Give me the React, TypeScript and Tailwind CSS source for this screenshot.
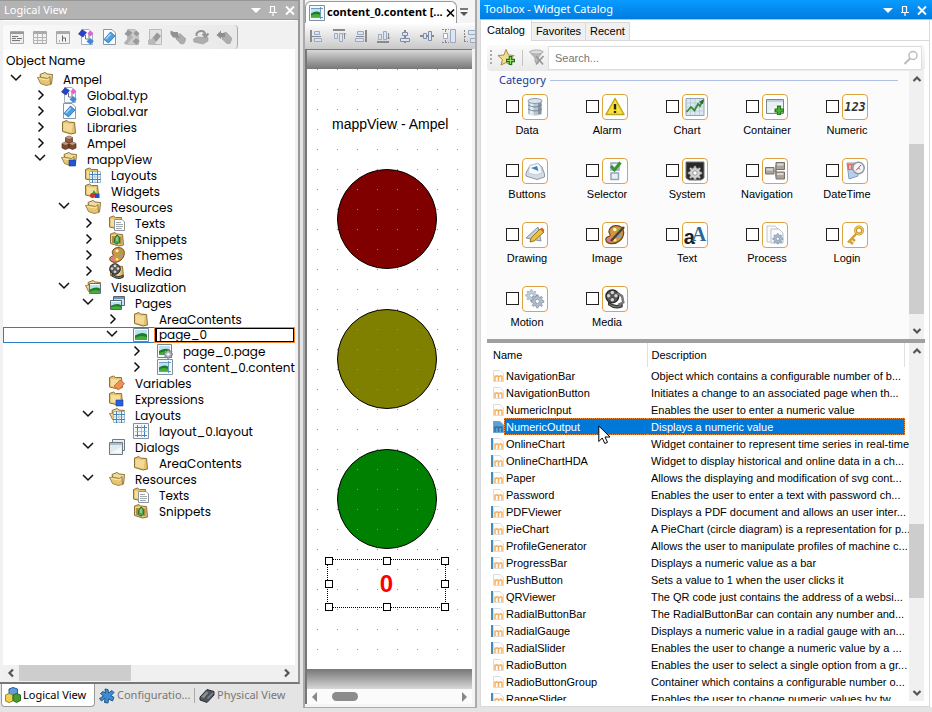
import React from "react";

type IconProps = { children: React.ReactNode; className?: string; size?: number };

function Svg({ children, className = "", size = 16 }: IconProps) {
  return (
    <svg viewBox={size === 20 ? "0 0 20 20" : "0 0 16 16"} width={size} height={size} className={`block shrink-0 ${className}`} fill="none" aria-hidden="true">
      {children}
    </svg>
  );
}

/* ---------- tree icons ---------- */

const closedFolder = (
  <>
    <path d="M1.500 3 6 1.500 7.500 3 13.500 3.500 14.500 14 10 15 1.500 12.500Z" fill="#e3c36f" stroke="#8d7135" />
    <path d="M2.500 4 12 5 10.500 13.500 2.500 11.500Z" fill="#f2da96" />
  </>
);

const openFolder = (
  <>
    <path d="M3 3.500 8 1.500 10 3 15.500 3.500 14.500 13 5 11Z" fill="#efdca0" stroke="#8d7135" />
    <path d="M.5 6.500 3 6 10.500 7.500 13 5.500 13.500 13.500 9 14.500 3.500 12.500Z" fill="#e6c56f" stroke="#8d7135" strokeWidth=".8" />
    <path d="M2 7.500 10 9 12 8" stroke="#f9ebb9" />
  </>
);

const miniFolder = (
  <>
    <path d="M.5 2.500 4.500 1 6.500 2.500 12.500 2.500 13.500 12.500 9 14 .5 12Z" fill="#e3c36f" stroke="#8d7135" />
    <path d="M2 4 11 4.500 11 12 2 11Z" fill="#f4df9f" />
  </>
);

const gridSheet = (
  <>
    <path d="M4.500 4.500H15.500V15.500H4.500Z" fill="#f1f7fb" stroke="#9fbad0" />
    <path d="M4 7.500H16M4 12.500H16M7.500 4V16M12.500 4V16" stroke="#4b82b4" />
    <path d="M4 10H16M10 4V16" stroke="#93b9d8" strokeWidth=".7" />
  </>
);

const landscape = (x: number, y: number, w: number, h: number) => (
  <>
    <rect x={x} y={y} width={w} height={h} fill="#b9e2f2" />
    <path d={`M${x} ${y + h * 0.55}Q${x + w * 0.6} ${y + h * 0.1} ${x + w} ${y + h * 0.45}V${y + h}H${x}Z`} fill="#1f7a2c" />
    <path d={`M${x} ${y + h * 0.8}Q${x + w * 0.5} ${y + h * 0.45} ${x + w} ${y + h * 0.75}V${y + h}H${x}Z`} fill="#45ad3a" />
  </>
);

const gearPath =
  "M7.200 1H8.800L9.300 3 10.700 3.600 12.500 2.600 13.600 3.700 12.500 5.400 13.100 6.800 15 7.300V8.900L13.100 9.400 12.500 10.800 13.600 12.500 12.400 13.600 10.700 12.500 9.300 13.100 8.800 15H7.200L6.700 13.100 5.300 12.500 3.600 13.600 2.400 12.400 3.500 10.700 2.900 9.300 1 8.800V7.200L2.900 6.700 3.500 5.300 2.500 3.600 3.600 2.500 5.300 3.500 6.700 2.900Z";

const paletteArt = (
  <>
    <path d="M8.500 .6C13 .3 15.500 2.500 15.300 6.500 15 11.500 10.500 15.600 5 15.300 2 15 .5 13.500 .7 11.300 1 9.500 3.500 9.700 4.200 8.600 4.600 7.500 2.600 6.600 3.400 4.500 4.200 2 6 .8 8.500 .6Z" fill="#cf9444" stroke="#704617" />
    <circle cx="8" cy="3.700" r="1.500" fill="#fff0cc" />
    <circle cx="12" cy="5" r="1.500" fill="#71b94a" />
    <circle cx="11.500" cy="9" r="1.500" fill="#7aa4d8" />
    <circle cx="4" cy="12.300" r="1.500" fill="#ee69b8" />
    <circle cx="8" cy="12.300" r="1.500" fill="#f7e465" />
  </>
);

const reelArt = (
  <>
    <circle cx="6" cy="6" r="5.300" fill="#555" stroke="#252525" />
    <circle cx="6" cy="2.900" r="1.400" fill="#d4d4d4" />
    <circle cx="3" cy="5.600" r="1.400" fill="#d4d4d4" />
    <circle cx="9" cy="5.600" r="1.400" fill="#d4d4d4" />
    <circle cx="6" cy="8.800" r="1.400" fill="#d4d4d4" />
    <path d="M3 11Q9 15.500 14 12V14.500Q8 17 3 13Z" fill="#777" stroke="#333" />
  </>
);

type IconName =
  | "folder" | "open" | "types" | "vars" | "boxes" | "mapp" | "layouts" | "widgets" | "texts" | "snippets"
  | "themes" | "media" | "vis" | "pages" | "page" | "pageFile" | "contentFile" | "variables" | "expressions"
  | "layoutsOpen" | "layoutFile" | "dialogs";

const typesArt = (
  <>
    <path d="M3.500 .5H11L14.500 4V15.500H3.500Z" fill="#fafcff" stroke="#a3afba" />
    <path d="M7.500 6V10H10M11 5V12" stroke="#777" />
    <path d="M.5 5 4 .8 8.500 3.500 5 8Z" fill="#2742cf" stroke="#1a2b8a" strokeWidth=".6" />
    <path d="M9.500 4.500 12 1.500 15.500 4.500 12.500 7.500Z" fill="#e661d9" />
    <path d="M8.500 12.500 12 9 15.800 12 12.500 15.800Z" fill="#3d88dc" />
  </>
);

const varsArt = (
  <>
    <path d="M2.500 .5H11L14.500 4V15.500H2.500Z" fill="#fafcff" stroke="#8797a6" />
    <path d="M3 10.500 9.500 3 14 7 7.500 14Z" fill="#4da0e2" stroke="#236bae" strokeWidth=".8" />
    <path d="M5 10 9.500 5" stroke="#a6d7fa" strokeWidth="1.500" />
  </>
);

const treeArt: Record<IconName, React.ReactNode> = {
  folder: closedFolder,
  open: openFolder,
  types: typesArt,
  vars: varsArt,
  boxes: (
    <>
      <path d="M4.500 2.500 8 1 11.500 2.500V7L8 8.500 4.500 7Z" fill="#8c5a3e" stroke="#573523" strokeWidth=".7" />
      <path d="M1 8.500 4.500 7 8 8.500V13L4.500 14.500 1 13ZM8 8.500 11.500 7 15 8.500V13L11.500 14.500 8 13Z" fill="#7a4a31" stroke="#4c2d1d" strokeWidth=".7" />
      <path d="M4.500 2.500 8 1 11.500 2.500 8 4ZM1 8.500 4.500 7 8 8.500 4.500 10ZM8 8.500 11.500 7 15 8.500 11.500 10Z" fill="#c99878" />
    </>
  ),
  mapp: (
    <>
      {openFolder}
      <path d="M8 9H14.500V15H8Z" fill="#2553d8" stroke="#1a3a9b" strokeWidth=".6" />
    </>
  ),
  layouts: <>{miniFolder}{gridSheet}</>,
  widgets: (
    <>
      {miniFolder}
      <path d="M9 7 12 12H6Z" fill="#3ba437" />
      <circle cx="7.500" cy="12.500" r="2.500" fill="#d3302e" />
      <path d="M10 10.500H14.500V15H10Z" fill="#1b55c2" />
    </>
  ),
  texts: (
    <>
      {miniFolder}
      <path d="M5.500 4.500H13L15.500 7V15.500H5.500Z" fill="#fff" stroke="#8c939b" />
      <path d="M7 7.500H12M7 9.500H14M7 11.500H14M7 13.500H13" stroke="#a3a9b0" />
    </>
  ),
  snippets: (
    <>
      {closedFolder}
      <path d="M3 5 12.500 5.500V13L3 12Z" fill="#ad8d46" />
      <path d="M8 4Q11.500 6 10.500 11 8 14.500 5.500 11.500 4.500 7 8 4Z" fill="#55a84b" stroke="#2e6b33" />
      <path d="M8 6V10" stroke="#c7efb4" />
    </>
  ),
  themes: paletteArt,
  media: <>{closedFolder}{reelArt}</>,
  vis: (
    <>
      {openFolder}
      <path d="M4.500 4.500H15.500V14.500H4.500Z" fill="#fff" stroke="#63717f" />
      {landscape(5, 6, 10, 8)}
    </>
  ),
  pages: (
    <>
      <path d="M4.500 1.500H15.500V10.500H4.500Z" fill="#cfe2ee" stroke="#59656f" />
      <path d="M5 3H15" stroke="#6b95b8" strokeWidth="2" />
      <path d="M1.500 5.500H12.500V14.500H1.500Z" fill="#fff" stroke="#59656f" />
      {landscape(2, 7, 10, 7)}
    </>
  ),
  page: (
    <>
      <path d="M.5 1.500H15.500V14.500H.5Z" fill="#fff" stroke="#79858f" />
      {landscape(2, 3, 12, 10)}
    </>
  ),
  pageFile: (
    <>
      <path d="M.5 1.500H14.500V14.500H.5Z" fill="#fff" stroke="#79858f" />
      {landscape(2, 3, 11, 9)}
      <g transform="translate(6 6) scale(.65)">
        <path d={gearPath} fill="#aeb7c0" stroke="#59636d" />
        <circle cx="8" cy="8" r="2" fill="#fff" />
      </g>
    </>
  ),
  contentFile: (
    <>
      <path d="M.5 .5H15.500V15.500H.5Z" fill="#f3f8fb" stroke="#8291a0" />
      {landscape(2, 4, 9, 8)}
      <path d="M11.500 2V14M2 3.500H14M2 12.500H14" stroke="#4a86b8" strokeWidth=".8" />
    </>
  ),
  variables: (
    <>
      {miniFolder}
      <path d="M5 11 11 5 15.500 8.500 9.500 15Z" fill="#f29155" stroke="#c8602a" strokeWidth=".8" />
    </>
  ),
  expressions: (
    <>
      {miniFolder}
      <path d="M7 9H14V15H7Z" fill="#2b5edc" stroke="#1a3a9b" strokeWidth=".6" />
    </>
  ),
  layoutsOpen: <>{openFolder}{gridSheet}</>,
  layoutFile: (
    <>
      <path d="M.5 .5H15.500V15.500H.5Z" fill="#f5f8fb" stroke="#8291a0" />
      <path d="M2 4.500H14M2 12.500H14M4.500 2V14M11.500 2V14" stroke="#4b82b4" />
      <path d="M2 8.500H14M8.500 2V14" stroke="#93b9d8" strokeWidth=".8" />
    </>
  ),
  dialogs: (
    <>
      <path d="M3.500 .5H15.500V11.500H3.500Z" fill="#e8eef2" stroke="#6d7a84" />
      <path d="M.5 3.500H13.500V15.500H.5Z" fill="#e3ebef" stroke="#6d7a84" />
      <path d="M1 5H13" stroke="#a9bfce" strokeWidth="2" />
      <path d="M2 14 12 8V14Z" fill="#f4f8fa" />
    </>
  ),
};

type Node = { level: number; label: string; icon: IconName; state?: "open" | "closed"; editing?: boolean };

const nodes: Node[] = [
  { level: 0, label: "Ampel", icon: "open", state: "open" },
  { level: 1, label: "Global.typ", icon: "types", state: "closed" },
  { level: 1, label: "Global.var", icon: "vars", state: "closed" },
  { level: 1, label: "Libraries", icon: "folder", state: "closed" },
  { level: 1, label: "Ampel", icon: "boxes", state: "closed" },
  { level: 1, label: "mappView", icon: "mapp", state: "open" },
  { level: 2, label: "Layouts", icon: "layouts" },
  { level: 2, label: "Widgets", icon: "widgets" },
  { level: 2, label: "Resources", icon: "open", state: "open" },
  { level: 3, label: "Texts", icon: "texts", state: "closed" },
  { level: 3, label: "Snippets", icon: "snippets", state: "closed" },
  { level: 3, label: "Themes", icon: "themes", state: "closed" },
  { level: 3, label: "Media", icon: "media", state: "closed" },
  { level: 2, label: "Visualization", icon: "vis", state: "open" },
  { level: 3, label: "Pages", icon: "pages", state: "open" },
  { level: 4, label: "AreaContents", icon: "folder", state: "closed" },
  { level: 4, label: "page_0", icon: "page", state: "open", editing: true },
  { level: 5, label: "page_0.page", icon: "pageFile", state: "closed" },
  { level: 5, label: "content_0.content", icon: "contentFile", state: "closed" },
  { level: 3, label: "Variables", icon: "variables" },
  { level: 3, label: "Expressions", icon: "expressions" },
  { level: 3, label: "Layouts", icon: "layoutsOpen", state: "open" },
  { level: 4, label: "layout_0.layout", icon: "layoutFile" },
  { level: 3, label: "Dialogs", icon: "dialogs", state: "open" },
  { level: 4, label: "AreaContents", icon: "folder" },
  { level: 3, label: "Resources", icon: "open", state: "open" },
  { level: 4, label: "Texts", icon: "texts" },
  { level: 4, label: "Snippets", icon: "snippets" },
];

const indent = ["pl-[6px]", "pl-[30px]", "pl-[54px]", "pl-[78px]", "pl-[102px]", "pl-[126px]"];

function Expander({ state }: { state?: "open" | "closed" }) {
  if (!state) return <span className="w-4 shrink-0" />;
  return (
    <button className="h-4 w-4 shrink-0" aria-label={state === "open" ? "Collapse" : "Expand"}>
      <Svg>
        {state === "open" ? (
          <path d="M2 4 7 9 12 4" stroke="#111" strokeWidth="1.500" />
        ) : (
          <path d="M5.500 3.500 10 8 5.500 12.500" stroke="#111" strokeWidth="1.500" />
        )}
      </Svg>
    </button>
  );
}

function TreeRow({ node }: { node: Node }) {
  return (
    <li
      role="treeitem"
      aria-expanded={node.state ? node.state === "open" : undefined}
      className={`flex h-4 items-center whitespace-nowrap ${indent[node.level]} ${node.editing ? "outline outline-1 -outline-offset-1 outline-[#2a7fcb]" : ""}`}
    >
      <Expander state={node.state} />
      <Svg className="ml-[12px]">{treeArt[node.icon]}</Svg>
      {node.editing ? (
        <div className="z-10 ml-[5px] flex h-4 min-w-0 flex-1 border border-[#ef8a3c]">
          <input
            aria-label="Object name"
            defaultValue={node.label}
            className="h-full w-full min-w-0 border border-l-2 border-black bg-white pl-[2px] outline-none"
          />
        </div>
      ) : (
        <span className="ml-[10px] pt-[2px]">{node.label}</span>
      )}
    </li>
  );
}

/* ---------- shared chrome ---------- */

function WindowButtons() {
  return (
    <div className="flex items-center gap-[1px] text-white">
      <button aria-label="Menu">
        <Svg><path d="M3 6H13L8 11Z" fill="currentColor" /></Svg>
      </button>
      <button aria-label="Pin">
        <Svg><path d="M5.500 10V4.500H9.500V10M4 10.500H12M8 11V14M9.500 4V10" stroke="currentColor" strokeWidth="1.200" /></Svg>
      </button>
      <button aria-label="Close">
        <Svg><path d="M4 4.500 12 12.500M12 4.500 4 12.500" stroke="currentColor" strokeWidth="1.800" /></Svg>
      </button>
    </div>
  );
}

function Arrow({ dir }: { dir: "up" | "down" | "left" | "right" }) {
  const paths = {
    up: "M4.500 10 8 6.500 11.500 10",
    down: "M4.500 6 8 9.500 11.500 6",
    left: "M10 4.500 6.500 8 10 11.500",
    right: "M6 4.500 9.500 8 6 11.500",
  };
  return (
    <button aria-label={`Scroll ${dir}`} className="shrink-0">
      <Svg><path d={paths[dir]} stroke="#555" strokeWidth="2.200" /></Svg>
    </button>
  );
}

/* ---------- left panel ---------- */

const leftTools: { name: string; art: React.ReactNode }[] = [
  { name: "Text file", art: <><path d="M1.500 2.500H14.500V14.500H1.500Z" fill="#eee" stroke="#aaa" /><path d="M1 4H15" stroke="#999" strokeWidth="2" /><path d="M3 7.500H9M3 9.500H7M8 9.500H13M3 11.500H11" stroke="#777" /></> },
  { name: "Table file", art: <><path d="M1.500 2.500H14.500V14.500H1.500Z" fill="#f2f2f2" stroke="#aaa" /><path d="M1 4H15" stroke="#aaa" strokeWidth="2" /><path d="M1 8.500H15M1 11.500H15M5.500 5V14M10.500 5V14" stroke="#b5b5b5" /></> },
  { name: "Header file", art: <><path d="M1.500 2.500H14.500V14.500H1.500Z" fill="#f2f2f2" stroke="#aaa" /><path d="M1 4H15" stroke="#aaa" strokeWidth="2" /><path d="M4 12H5M7.500 6.500V12.500M7.500 9H10.500V12.500" stroke="#666" /></> },
  { name: "Data types", art: typesArt },
  { name: "Variables", art: varsArt },
  { name: "Local types", art: <><path d="M3.500 .5H11L14.500 4V15.500H3.500Z" fill="#ccc" stroke="#bbb" /><path d="M.5 5 4 .8 8.500 3.500 5 8ZM9.500 4.500 12 1.500 15.500 4.500 12.500 7.500ZM8.500 12.500 12 9 15.800 12 12.500 15.800Z" fill="#999" /><path d="M1 15 8 7" stroke="#b0b0b0" strokeWidth="3" /></> },
  { name: "Local variables", art: <><path d="M2.500 .5H14.500V15.500H2.500Z" fill="#e2e2e2" stroke="#bbb" /><path d="M5 9.500 10 3.500 14 7 9 13Z" fill="#999" /><path d="M1 15.500V11L7 9 9 15.500Z" fill="#b9b9b9" /></> },
  { name: "Import", art: <><path d="M6 6.500 10 4.500 16 10 14 14.500 11 15 6 10Z" fill="#adadad" stroke="#999" strokeWidth=".6" /><path d="M.5 1.500 4 3 8 3 8 6.500 10 9 3 8.500 .5 5Z" fill="#929292" /></> },
  { name: "Refresh", art: <><path d="M.5 10 4 8 15 8.500V12L10 15 1 13Z" fill="#adadad" stroke="#999" strokeWidth=".6" /><path d="M3.500 7V5Q5 1.500 9 2 12 2.500 12.500 6M9.500 5 12.500 8 15.500 4.500" stroke="#949494" strokeWidth="2" /></> },
  { name: "Export", art: <><path d="M6 5 10 3 16 9.500 14 14.500 11 14.500 6 10Z" fill="#adadad" stroke="#999" strokeWidth=".6" /><path d="M.5 6 5 1.500V4H9V8H5V10Z" fill="#8e8e8e" /></> },
];

function LogicalView() {
  return (
    <aside className="flex w-[300px] shrink-0 flex-col">
      <div className="flex min-h-0 flex-1 flex-col border-r-2 border-b-2 border-r-[#999] border-b-[#777] bg-[#f1f1f1]">
        <header className="flex h-5 shrink-0 items-center justify-between border-y border-[#979797] bg-[#b3b3b3] pl-1 font-['Noto_Sans','Open_Sans',sans-serif] text-[11px] text-white">
          <h2>Logical View</h2>
          <WindowButtons />
        </header>
        <div className="mx-[3px] flex min-h-0 flex-1 flex-col border-t border-white">
          <div className="flex h-7 shrink-0 items-center pt-1">
            <div className="flex h-6 items-center gap-[7px] rounded border-r border-[#aaa] bg-linear-to-r from-[#fafafa] to-[#e9e9e9] pr-[5px] pl-[6px]">
              {leftTools.map((t) => (
                <button key={t.name} aria-label={t.name}><Svg>{t.art}</Svg></button>
              ))}
            </div>
          </div>
          <div className="min-h-0 flex-1 overflow-hidden bg-white font-['Poppins','Inter',sans-serif] text-[12px] leading-4 text-black [font-feature-settings:'cv11']">
            <div className="flex h-[22px] items-center pt-[2px] pl-[3px]">Object Name</div>
            <ul role="tree">
              {nodes.map((n, i) => <TreeRow key={i} node={n} />)}
            </ul>
          </div>
          <div className="mb-[1px] flex h-4 shrink-0 items-center justify-between bg-[#f0f0f0]">
            <Arrow dir="left" />
            <div className="h-4 flex-1"><div className="h-4 w-[43%] bg-[#cdcdcd]" /></div>
            <Arrow dir="right" />
          </div>
        </div>
      </div>
      <nav className="flex h-[28px] shrink-0 items-start pl-[1px] font-['Noto_Sans','Open_Sans',sans-serif] text-[11px] text-[#777]">
        <button className="flex h-[23px] w-[94px] items-center gap-[2px] rounded-b border border-t-0 border-[#999] bg-white pl-[3px] whitespace-nowrap text-black">
          <Svg>
            <path d="M4 2 8 .5 12.500 2V8L8 10 4 8Z" fill="#5d9edf" stroke="#2a5b94" />
            <path d="M.5 8 4 6.500 8 8V14L4 15.500 .5 14Z" fill="#efd451" stroke="#9b842b" />
            <path d="M8 8 11.500 6.500 15.500 8V13.500L11.500 15.500 8 13.500Z" fill="#499b31" stroke="#2a6a1d" />
          </Svg>
          Logical View
        </button>
        <button className="flex h-[23px] w-[99px] items-center gap-[2px] pl-[4px] whitespace-nowrap">
          <Svg>
            <path d="M6 1 9 1.500 9.500 5 13 2.500 15 4.500 12 7.500 15 9.500 13.500 13 9.500 11 9 15 5.500 14.500 6 10 2.500 13 .5 10.500 4.500 8 1.500 5.500 4 3.500 6.500 5Z" fill="#3f8bd2" stroke="#245989" />
          </Svg>
          Configuratio...
        </button>
        <span className="mt-1 h-[15px] w-px bg-[#aaa]" />
        <button className="flex h-[23px] items-center gap-[2px] pl-[4px] whitespace-nowrap">
          <Svg>
            <path d="M1 9 8 1.500 15 3.500V7L8 14.500 1 12Z" fill="#50545b" stroke="#2d3036" />
            <path d="M2 9 7.500 3.500 9.500 4.500 5 10ZM8 10 13.500 4.500 14.500 5 9 11Z" fill="#8b9098" />
          </Svg>
          Physical View
        </button>
      </nav>
    </aside>
  );
}

/* ---------- editor ---------- */

const line = "#8a8a8a";
const boxFill = "#dde5f0";
const boxLine = "#9aa9c4";

const alignTools: { name: string; art: React.ReactNode }[] = [
  { name: "Align left", art: <><path d="M2 2V14" stroke={line} strokeWidth="2" /><path d="M5.500 3.500H10.500V6.500H5.500ZM5.500 10.500H12.500V13.500H5.500Z" fill={boxFill} stroke={boxLine} /><path d="M3 8.500H12" stroke={line} /></> },
  { name: "Align top", art: <><path d="M2 2H14" stroke={line} strokeWidth="2" /><path d="M3.500 5.500H6.500V10.500H3.500ZM8.500 5.500H11.500V13.500H8.500Z" fill={boxFill} stroke={boxLine} /><path d="M13.500 11V5M12 6.500 13.500 5 15 6.500" stroke={line} /></> },
  { name: "Align right", art: <><path d="M13 2V14" stroke={line} strokeWidth="2" /><path d="M4.500 3.500H10.500V6.500H4.500ZM2.500 10.500H10.500V13.500H2.500Z" fill={boxFill} stroke={boxLine} /><path d="M3 8.500H11" stroke={line} /></> },
  { name: "Align bottom", art: <><path d="M2 14H14" stroke={line} strokeWidth="2" /><path d="M3.500 6.500H6.500V11.500H3.500ZM8.500 3.500H11.500V11.500H8.500Z" fill={boxFill} stroke={boxLine} /><path d="M13.500 5V11M12 9.500 13.500 11 15 9.500" stroke={line} /></> },
  { name: "Center horizontally", art: <><path d="M8 2V15" stroke={line} strokeWidth="2" /><path d="M5.500 4.500H10.500V7.500H5.500ZM3.500 10.500H12.500V13.500H3.500Z" fill={boxFill} stroke="#7d8dab" /></> },
  { name: "Center vertically", art: <><path d="M1 8H15" stroke={line} strokeWidth="2" /><path d="M4.500 5.500H7.500V10.500H4.500ZM9.500 3.500H12.500V12.500H9.500Z" fill={boxFill} stroke="#7d8dab" /></> },
  { name: "Same height", art: <><path d="M9.500 1.500H14.500V14.500H9.500Z" fill={boxFill} stroke={boxLine} /><path d="M2.500 5.500H6.500V10.500H2.500Z" fill="#fff" stroke={boxLine} /><path d="M1 1.500H8M1 14.500H8" stroke={line} strokeDasharray="2 1" /><path d="M4.500 1V4M4.500 12V15" stroke={line} /></> },
  { name: "Same width", art: <><path d="M5.500 2.500H14V6.500H5.500ZM7.500 10.500H14V14.500H7.500Z" fill={boxFill} stroke={boxLine} /><path d="M1.500 2V14M1 8.500H4M1 13.500H5" stroke={line} strokeDasharray="2 1" /></> },
];

const lamps = [
  { name: "red", cls: "top-[100px] bg-[#800000]" },
  { name: "yellow", cls: "top-[240px] bg-[#808000]" },
  { name: "green", cls: "top-[380px] bg-[#008000]" },
];

const handles = [
  "-top-[3px] -left-[3px]", "-top-[3px] left-[55px]", "-top-[3px] -right-[4px]",
  "top-[20px] -left-[3px]", "top-[20px] -right-[4px]",
  "-bottom-[4px] -left-[3px]", "-bottom-[4px] left-[55px]", "-bottom-[4px] -right-[4px]",
];

function Editor() {
  return (
    <main className="mb-1 ml-[3px] flex w-[174px] shrink-0 flex-col border-x-2 border-b border-[#aaa] bg-[#f4f4f4]">
      <div className="flex h-[23px] shrink-0 items-end">
        <button className="flex h-[22px] w-[152px] shrink-0 items-center rounded-t-md border border-b-0 border-[#999] bg-white pl-[3px] font-['Noto_Sans','Open_Sans',sans-serif] text-[11px] font-bold whitespace-nowrap text-black">
          <Svg>{treeArt.contentFile}</Svg>
          <span className="ml-[2px]">content_0.content [...</span>
          <Svg className="ml-auto"><path d="M4 4.500 11 11.500M11 4.500 4 11.500" stroke="#000" strokeWidth="1.600" /></Svg>
        </button>
        <button aria-label="Open documents" className="h-[22px]">
          <Svg><path d="M3 5H11" stroke="#555" strokeWidth="1.500" /><path d="M3 8H11L7 12Z" fill="#555" /></Svg>
        </button>
      </div>
      <div className="flex h-[26px] shrink-0 items-center gap-[6px] overflow-hidden bg-linear-to-b from-white to-[#c9c9c9] pl-[4px]">
        {alignTools.map((t) => (
          <button key={t.name} aria-label={t.name} className="shrink-0"><Svg>{t.art}</Svg></button>
        ))}
      </div>
      <div className="mr-[3px] mb-[3px] flex min-h-0 flex-1 flex-col border-t border-l-2 border-[#777] bg-white">
        <div className="h-[19px] shrink-0 bg-linear-to-b from-[#d8d8d8] to-[#777]" />
        <div className="relative min-h-0 flex-1 overflow-hidden bg-white">
          <p className="absolute top-[45px] left-[25px] font-['Liberation_Sans',Arial,sans-serif] text-[14px] leading-5 whitespace-nowrap text-black">
            mappView - Ampel
          </p>
          {lamps.map((l) => (
            <div key={l.name} className={`absolute left-[30px] h-[100px] w-[100px] rounded-full border border-black ${l.cls}`} />
          ))}
          <svg className="absolute inset-0 h-full w-full" shapeRendering="crispEdges" aria-hidden="true">
            <defs>
              <pattern id="canvas-dots" width="20" height="20" patternUnits="userSpaceOnUse">
                <rect x="10" y="0" width="1" height="1" fill="#3fc565" />
              </pattern>
            </defs>
            <rect width="100%" height="100%" fill="url(#canvas-dots)" />
          </svg>
          <div className="absolute top-[490px] left-[20px] flex h-[49px] w-[119px] items-center justify-center border border-dotted border-black font-['Liberation_Sans',Arial,sans-serif] text-2xl font-bold text-[#f00]">
            0
            {handles.map((h) => (
              <span key={h} className={`absolute h-2 w-2 border border-black bg-white ${h}`} />
            ))}
          </div>
        </div>
        <div className="h-5 shrink-0 bg-linear-to-b from-[#777] to-[#d8d8d8]" />
        <div className="flex h-[15px] shrink-0 items-center bg-[#fbfbfb]">
          <button aria-label="Scroll left"><Svg><path d="M10 3V13L5 8Z" fill="#888" /></Svg></button>
          <div className="flex-1"><div className="ml-[9px] h-[9px] w-[26px] rounded-full bg-[#8c8c8c]" /></div>
          <button aria-label="Scroll right"><Svg><path d="M6 3V13L11 8Z" fill="#888" /></Svg></button>
        </div>
      </div>
    </main>
  );
}

/* ---------- toolbox ---------- */

const gearArt = (fill: string, stroke: string) => (
  <>
    <path d={gearPath} fill={fill} stroke={stroke} strokeWidth=".7" />
    <circle cx="8" cy="8" r="2.200" fill="#fff" stroke={stroke} strokeWidth=".7" />
  </>
);

const categories: { name: string; art: React.ReactNode }[] = [
  { name: "Data", art: <><path d="M3 4V16Q3 18.500 10 18.500T17 16V4Z" fill="#b7c4d0" /><path d="M6 4V18M7.500 4V18" stroke="#e5edf3" strokeWidth="2" /><path d="M14.500 4V17" stroke="#8293a4" strokeWidth="3" /><ellipse cx="10" cy="4" rx="7" ry="2.500" fill="#dbe4eb" stroke="#8b9bab" /><path d="M3 8Q10 12 17 8M3 12Q10 16 17 12" stroke="#75879a" /></> },
  { name: "Alarm", art: <><path d="M10 1.500 19 17.500H1Z" fill="#f8e33c" stroke="#c0a51e" strokeLinejoin="round" strokeWidth="1.500" /><path d="M10 7V12.500M10 14V16" stroke="#2d2808" strokeWidth="2.400" /></> },
  { name: "Chart", art: <><path d="M1 1.500H19V18.500H1Z" fill="#dbe8f2" stroke="#8fa5b7" /><path d="M1 6H19M1 10H19M1 14H19M5.500 2V18M10 2V18M14.500 2V18" stroke="#afc6d8" strokeWidth=".7" /><path d="M1.500 15 6 10 9.500 13.500 13 7 15 9 17.500 4" stroke="#3a8d32" strokeWidth="1.800" /><path d="M14 5 19 2 18 7Z" fill="#246822" /></> },
  { name: "Container", art: <><path d="M1.500 2.500H18.500V16.500H1.500Z" fill="#e9f0f4" stroke="#7b8790" /><path d="M2 4H18" stroke="#c0d1df" strokeWidth="2" /><path d="M3 15 16 6V15Z" fill="#f8fbfc" /><path d="M14 8.500V18M9.500 13.500H19" stroke="#277b1c" strokeWidth="4.200" /><path d="M14 10V17M11 13.500H18" stroke="#49b133" strokeWidth="2" /></> },
  { name: "Numeric", art: null },
  { name: "Buttons", art: <><path d="M1 12 5 4.500 13 2.500 17 6 19.500 13V16L12 18.500 1 15Z" fill="#d3dbe4" stroke="#8d98a5" /><path d="M5 4.500 13 2.500 16 6 17 12 11 14 3 12Z" fill="#f6f9fb" stroke="#c3ccd6" /><path d="M6 7 12 5 13.500 10 11 9Z" fill="#3d80bd" /></> },
  { name: "Selector", art: <><path d="M6 2H14V9H6ZM6 12H13.500V18.500H6Z" fill="#e9eff4" stroke="#92a6b8" strokeWidth="1.500" /><path d="M6 5 9.500 9 15.500 1.500" stroke="#36942c" strokeWidth="3" /></> },
  { name: "System", art: <><path d="M1 1H19V17L16 19H4L1 17Z" fill="#292929" stroke="#777" /><g transform="translate(2 4) scale(1)">{gearArt("#d1d1d1", "#777")}</g></> },
  { name: "Navigation", art: <><path d="M8 10H11V5H15M11 10V15H15" stroke="#696969" strokeWidth="1.200" /><path d="M.5 6.500H9V13H.5ZM11 1.500H19.500V8.500H11ZM11 11H19.500V18H11Z" fill="#aaa49c" stroke="#77716b" /><path d="M1.500 8.500H8M12 3.500H18.500M12 13H18.500" stroke="#dcd7d0" strokeWidth="2" /></> },
  { name: "DateTime", art: <><path d="M2 2 12 2 13 15 4 18Z" fill="#b7cfe9" stroke="#7f9dbe" /><path d="M2 3H11V9H3Z" fill="#dd6c66" /><path d="M5 4V8M8 4V8" stroke="#fff" /><circle cx="13.500" cy="7" r="5.700" fill="#f3f5f7" stroke="#8f969f" strokeWidth="1.500" /><path d="M11 9.500 16 4M13.500 7 15 8.500" stroke="#b34444" /></> },
  { name: "Drawing", art: <><path d="M1 13 13 2 16 16Z" fill="#c5ced8" stroke="#8594a3" /><path d="M7 12 11 8 12 13Z" fill="#fff" /><path d="M5 17 6 13 15 4 19 7 9 16Z" fill="#eac13b" stroke="#97751a" /><path d="M15 4 17 2.500 19.500 5 18 7Z" fill="#d36445" /></> },
  { name: "Image", art: <><g transform="scale(1.22)">{paletteArt}</g><path d="M19 2 6 16" stroke="#4d4039" strokeWidth="2.500" /></> },
  { name: "Text", art: null },
  { name: "Process", art: <><path d="M2 1H10L13 4V17H2Z" fill="#f8f9fb" stroke="#c3c7cc" /><path d="M6 4H14L18 8V18H6Z" fill="#fafbfc" stroke="#bbc0c7" /><g transform="translate(7 8) scale(.72)">{gearArt("#a8bbcf", "#62788e")}</g></> },
  { name: "Login", art: <><circle cx="14" cy="5.500" r="3.500" stroke="#c9962b" strokeWidth="3" /><circle cx="14" cy="5.500" r="3.800" stroke="#f6d770" strokeWidth="1" /><path d="M11.500 8.500 3 17.500M4.500 16 8 19M7 13.500 10 16" stroke="#d3a033" strokeWidth="2.500" /></> },
  { name: "Motion", art: <><g transform="translate(0 0) scale(.8)">{gearArt("#c3cedb", "#8494a5")}</g><g transform="translate(5 5) scale(.92)">{gearArt("#aebccc", "#718398")}</g></> },
  { name: "Media", art: <><g transform="scale(1.220)">{reelArt}<path d="M10 3 14 6 15 11 11 13" stroke="#777" strokeWidth="2" /></g></> },
];

function CategoryIcon({ name, art }: { name: string; art: React.ReactNode }) {
  if (name === "Numeric")
    return <span className="font-['DejaVu_Sans_Mono','Liberation_Mono',monospace] text-[12px] font-bold text-[#333] italic">123</span>;
  if (name === "Text")
    return (
      <span className="flex font-bold">
        <span className="pt-[3px] font-['Liberation_Sans',sans-serif] text-[20px] leading-5 text-[#222]">a</span>
        <span className="-ml-[3px] font-['Liberation_Serif',serif] text-[20px] leading-5 text-[#286a9e]">A</span>
      </span>
    );
  return <Svg size={20}>{art}</Svg>;
}

const widgets: [string, string, boolean][] = [
  ["NavigationBar", "Object which contains a configurable number of b...", false],
  ["NavigationButton", "Initiates a change to an associated page when th...", false],
  ["NumericInput", "Enables the user to enter a numeric value", false],
  ["NumericOutput", "Displays a numeric value", false],
  ["OnlineChart", "Widget container to represent time series in real-time", true],
  ["OnlineChartHDA", "Widget to display historical and online data in a ch...", true],
  ["Paper", "Allows the displaying and modification of svg cont...", true],
  ["Password", "Enables the user to enter a text with password ch...", false],
  ["PDFViewer", "Displays a PDF document and allows an user inter...", true],
  ["PieChart", "A PieChart (circle diagram) is a representation for p...", true],
  ["ProfileGenerator", "Allows the user to manipulate profiles of machine c...", true],
  ["ProgressBar", "Displays a numeric value as a bar", true],
  ["PushButton", "Sets a value to 1 when the user clicks it", false],
  ["QRViewer", "The QR code just contains the address of a websi...", true],
  ["RadialButtonBar", "The RadialButtonBar can contain any number and...", true],
  ["RadialGauge", "Displays a numeric value in a radial gauge with an...", true],
  ["RadialSlider", "Enables the user to change a numeric value by a ...", true],
  ["RadioButton", "Enables the user to select a single option from a gr...", false],
  ["RadioButtonGroup", "Container which contains a configurable number o...", false],
  ["RangeSlider", "Enables the user to change numeric values by tw...", true],
];

function WidgetIcon({ bar, selected }: { bar: boolean; selected: boolean }) {
  return (
    <Svg>
      <path d="M3.500 2.500H10L13.500 6V13.500H3.500Z" fill={selected ? "#5ba0d8" : "#fdfdfd"} stroke={selected ? "#6aa9d4" : "#ddd"} />
      <path d="M5 13V7.500M5 9Q6.500 7 8.500 8.500V13M8.500 9Q10.500 7 12 8.500V13" stroke={selected ? "#34719f" : "#f5b05f"} strokeWidth="1.500" />
      {bar && <path d="M2 2V14" stroke="#3f8fc0" strokeWidth="2" />}
      {selected && <path d="M3.500 2V14" stroke="#82b93a" />}
    </Svg>
  );
}

function VScroll({ thumb }: { thumb: string }) {
  return (
    <div className="mr-[1px] flex w-[15px] shrink-0 flex-col items-center bg-[#f0f0f0]">
      <Arrow dir="up" />
      <div className="flex w-full flex-1 flex-col"><div className={`w-full bg-[#cdcdcd] ${thumb}`} /></div>
      <Arrow dir="down" />
    </div>
  );
}

function Toolbox() {
  return (
    <section className="mb-[5px] ml-[3px] flex min-w-0 flex-1 flex-col bg-white font-['Liberation_Sans',Arial,sans-serif] text-[11px] text-black">
      <header className="flex h-5 shrink-0 items-center justify-between border-b border-[#9bc9ee] bg-linear-to-b from-[#0a9bff] to-[#007ce0] pr-[2px] pl-[4px] font-['Noto_Sans','Open_Sans',sans-serif] text-white">
        <h2>Toolbox - Widget Catalog</h2>
        <WindowButtons />
      </header>
      <div className="mr-[2px] flex min-h-0 flex-1 flex-col border-r border-b border-l border-[#d9d9d9]">
        <div className="flex h-[21px] shrink-0 items-end border-b border-[#d9d9d9]" role="tablist">
          <button role="tab" className="-mb-px h-[21px] w-[51px] border-r border-[#d9d9d9] bg-white">Catalog</button>
          <button role="tab" className="h-[18px] w-[54px] border-t border-r border-[#d9d9d9] bg-[#f0f0f0]">Favorites</button>
          <button role="tab" className="h-[18px] w-[44px] border-t border-r border-[#d9d9d9] bg-[#f0f0f0]">Recent</button>
        </div>
        <div className="mt-[4px] mr-[4px] mb-[5px] ml-[6px] flex min-h-0 flex-1 flex-col">
          <div className="flex h-[26px] shrink-0 items-center rounded bg-linear-to-b from-[#fafafa] to-[#eaeaea] pl-[3px]">
            <span className="mr-[5px] h-4 w-[2px] bg-[repeating-linear-gradient(#aaa_0_2px,transparent_2px_4px)]" />
            <button aria-label="Add favorite">
              <Svg size={20} className="mr-[5px]">
                <path d="M9 1.500 11.500 7 17 7.500 13 11.500 14.500 17 9 14.500 4 17 5.500 11.500 1 7.500 7 7Z" fill="#f4de8d" stroke="#a28b46" />
                <path d="M13.500 8V17M9 12.500H18" stroke="#1c711a" strokeWidth="3.500" />
                <path d="M13.500 9V16M10 12.500H17" stroke="#8be26b" strokeWidth="1.200" />
              </Svg>
            </button>
            <span className="h-4 w-px bg-[#c4c4c4]" />
            <button aria-label="Clear filter" className="ml-[5px]">
              <Svg size={20}>
                <path d="M1.500 3.500H15L10 10V15.500L7 14V10Z" fill="#bbb" stroke="#aaa" />
                <ellipse cx="8.500" cy="4" rx="6.500" ry="2" fill="#ddd" stroke="#aaa" />
                <path d="M8 8 15 16.500M15.500 8 8 16.500" stroke="#999" strokeWidth="1.800" />
              </Svg>
            </button>
            <label className="mr-[3px] flex h-[24px] min-w-0 flex-1 items-center border border-[#dedede] bg-white pr-[2px] pl-[6px]">
              <input type="text" aria-label="Search widgets" placeholder="Search..." className="w-full min-w-0 text-[11px] outline-none placeholder:text-[#777]" />
              <Svg>
                <circle cx="10" cy="5.500" r="4" stroke="#bbb" strokeWidth="1.500" />
                <path d="M7 8.500 1.500 14" stroke="#bbb" strokeWidth="2" />
              </Svg>
            </label>
          </div>
          <div className="flex h-[268px] shrink-0">
            <fieldset className="min-w-0 flex-1 bg-[#fbfbfb]">
              <div className="flex h-[19px] items-center gap-[4px] pr-[11px] pl-[12px] font-['Noto_Sans','Open_Sans',sans-serif] text-[11px] text-[#17399b]">
                Category
                <span className="h-px flex-1 bg-[#b0bfe3]" />
              </div>
              <div className="mt-1 grid grid-cols-[repeat(5,80px)]">
                {categories.map((c) => (
                  <label key={c.name} className="flex h-16 flex-col items-center">
                    <span className="flex items-center gap-[3px]">
                      <input type="checkbox" className="mb-[2px] h-[13px] w-[13px] appearance-none border border-[#222] bg-white" />
                      <span className="flex h-[26px] w-[26px] items-center justify-center overflow-hidden rounded border border-[#dfa440] bg-white">
                        <CategoryIcon name={c.name} art={c.art} />
                      </span>
                    </span>
                    <span className="mt-[2px] leading-4">{c.name}</span>
                  </label>
                ))}
              </div>
            </fieldset>
            <VScroll thumb="mt-[57px] h-[170px]" />
          </div>
          <div className="h-1 shrink-0 bg-[#a0a0a0]" />
          <div className="relative flex min-h-0 flex-1">
            <div className="min-w-0 flex-1 overflow-hidden">
              <table className="w-full table-fixed border-collapse">
                <thead>
                  <tr className="h-[24px] text-left">
                    <th className="w-[160px] border-r border-[#e0e0e0] p-0 pl-[6px] font-normal">Name</th>
                    <th className="p-0 font-normal">
                      <span className="mr-[4px] flex h-[24px] items-center border-r border-[#e0e0e0] pl-[4px]">Description</span>
                    </th>
                  </tr>
                </thead>
                <tbody>
                  {widgets.map(([name, desc, bar]) => {
                    const sel = name === "NumericOutput";
                    return (
                      <tr key={name} className="h-[17px] leading-4 whitespace-nowrap">
                        <td className="p-0">
                          <div className="flex h-[17px] items-center pl-[3px]">
                            <WidgetIcon bar={bar} selected={sel} />
                            <span className={`-ml-[2px] flex h-[17px] flex-1 items-center pl-[1px] ${sel ? "border-y border-l border-dotted border-[#ef8a3c] bg-[#0078d7] text-white" : "border-l border-transparent"}`}>{name}</span>
                          </div>
                        </td>
                        <td className="p-0">
                          <div className={`mr-[4px] flex h-[17px] items-center pl-[4px] ${sel ? "border-y border-r border-dotted border-[#ef8a3c] bg-[#0078d7] text-white" : ""}`}>{desc}</div>
                        </td>
                      </tr>
                    );
                  })}
                </tbody>
              </table>
            </div>
            <VScroll thumb="mt-[165px] h-[74px]" />
            <svg width="14" height="20" viewBox="0 0 14 20" className="absolute top-[82px] left-[111px]" aria-hidden="true">
              <path d="M.8 1V16.500L4.300 13 6.800 18.500 9.500 17.300 7 12H12Z" fill="#fff" stroke="#000" />
            </svg>
          </div>
        </div>
      </div>
    </section>
  );
}

export default function App() {
  return (
    <div className="flex h-screen min-h-[640px] w-full overflow-hidden bg-[#e4e4e4]">
      <LogicalView />
      <Editor />
      <Toolbox />
    </div>
  );
}
